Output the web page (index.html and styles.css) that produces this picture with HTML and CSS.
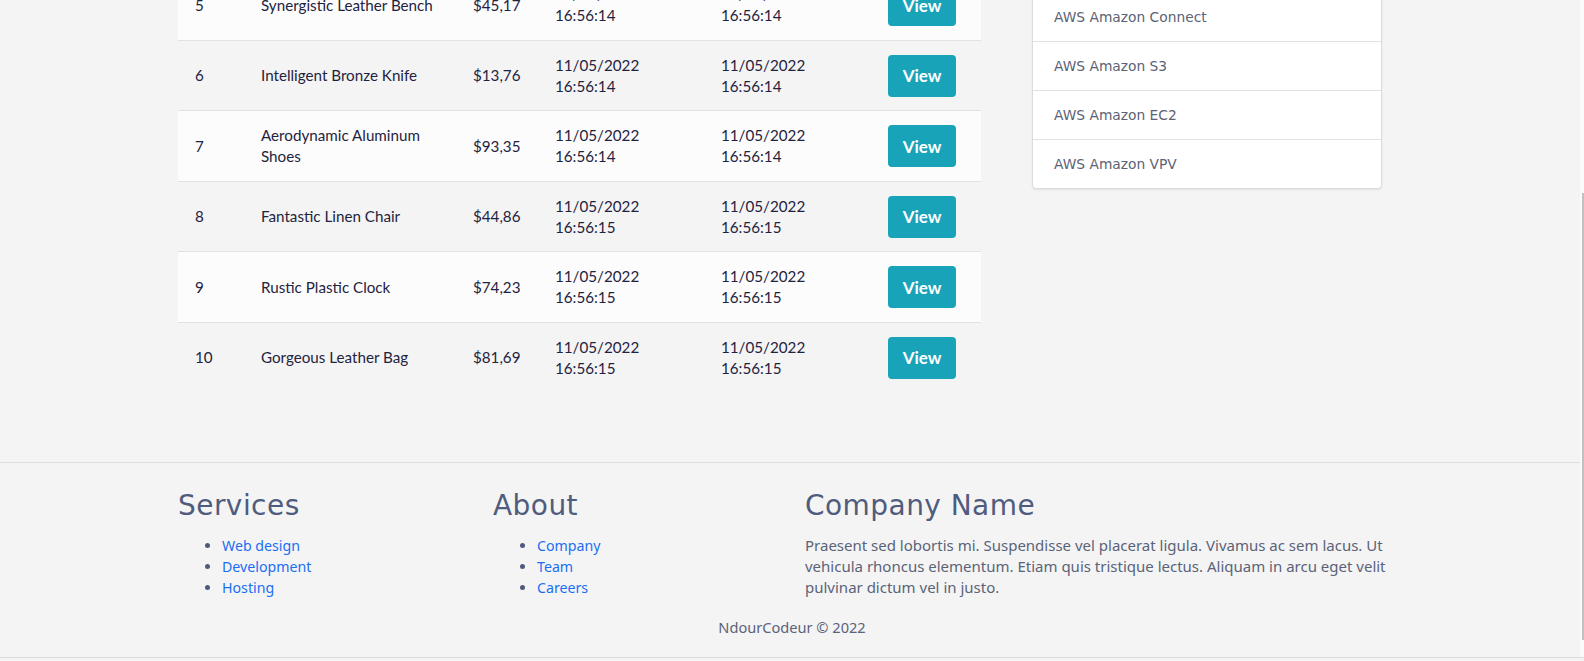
FILE: index.html
```html
<!DOCTYPE html>
<html lang="en">
<head>
<meta charset="utf-8">
<title>Products</title>
<link rel="stylesheet" href="styles.css">
</head>
<body>
<main class="content">
  <div class="container main-row">
    <table class="products">
      <colgroup>
        <col class="c-id"><col class="c-name"><col class="c-price"><col class="c-date"><col class="c-date2"><col class="c-act">
      </colgroup>
      <tbody>
        <tr><td>5</td><td>Synergistic Leather Bench</td><td>$45,17</td><td>11/05/2022 16:56:14</td><td>11/05/2022 16:56:14</td><td><button class="btn-view" type="button">View</button></td></tr>
        <tr><td>6</td><td>Intelligent Bronze Knife</td><td>$13,76</td><td>11/05/2022 16:56:14</td><td>11/05/2022 16:56:14</td><td><button class="btn-view" type="button">View</button></td></tr>
        <tr><td>7</td><td>Aerodynamic Aluminum Shoes</td><td>$93,35</td><td>11/05/2022 16:56:14</td><td>11/05/2022 16:56:14</td><td><button class="btn-view" type="button">View</button></td></tr>
        <tr><td>8</td><td>Fantastic Linen Chair</td><td>$44,86</td><td>11/05/2022 16:56:15</td><td>11/05/2022 16:56:15</td><td><button class="btn-view" type="button">View</button></td></tr>
        <tr><td>9</td><td>Rustic Plastic Clock</td><td>$74,23</td><td>11/05/2022 16:56:15</td><td>11/05/2022 16:56:15</td><td><button class="btn-view" type="button">View</button></td></tr>
        <tr><td>10</td><td>Gorgeous Leather Bag</td><td>$81,69</td><td>11/05/2022 16:56:15</td><td>11/05/2022 16:56:15</td><td><button class="btn-view" type="button">View</button></td></tr>
      </tbody>
    </table>
    <aside class="side">
      <ul class="list-group">
        <li class="list-item">AWS Amazon Connect</li>
        <li class="list-item">AWS Amazon S3</li>
        <li class="list-item">AWS Amazon EC2</li>
        <li class="list-item">AWS Amazon VPV</li>
      </ul>
    </aside>
  </div>
</main>
<footer class="footer">
  <div class="container footer-grid">
    <div class="f-col">
      <h3 class="f-title">Services</h3>
      <ul class="f-list">
        <li><a class="f-link" href="#">Web design</a></li>
        <li><a class="f-link" href="#">Development</a></li>
        <li><a class="f-link" href="#">Hosting</a></li>
      </ul>
    </div>
    <div class="f-col">
      <h3 class="f-title">About</h3>
      <ul class="f-list">
        <li><a class="f-link" href="#">Company</a></li>
        <li><a class="f-link" href="#">Team</a></li>
        <li><a class="f-link" href="#">Careers</a></li>
      </ul>
    </div>
    <div class="f-col">
      <h3 class="f-title">Company Name</h3>
      <p class="f-text">Praesent sed lobortis mi. Suspendisse vel placerat ligula. Vivamus ac sem lacus. Ut vehicula rhoncus elementum. Etiam quis tristique lectus. Aliquam in arcu eget velit pulvinar dictum vel in justo.</p>
    </div>
  </div>
  <p class="copyright">NdourCodeur © 2022</p>
</footer>
<div class="scrollbar"><div class="scroll-thumb"></div></div>
</body>
</html>
```
FILE: styles.css
```css
html, body {
  margin: 0;
  padding: 0;
}
body {
  background: #f4f4f4;
  font-family: "Noto Sans", "Open Sans", sans-serif;
  color: #1f2340;
  overflow: hidden;
}
.container {
  width: 1228px;
  margin: 0 auto;
}
.main-row {
  display: flex;
  align-items: flex-start;
  margin-top: -30px;
  padding-bottom: 69px;
}
.products {
  width: 803px;
  flex: 0 0 803px;
  border-collapse: collapse;
  table-layout: fixed;
  font-family: "Lato", sans-serif;
  font-size: 15.2px;
  color: #1f2340;
}
.c-id { width: 66px; }
.c-name { width: 212px; }
.c-price { width: 82px; }
.c-date { width: 166px; }
.c-date2 { width: 167px; }
.c-act { width: 110px; }
.products td {
  padding: 14px 17px 13px;
  line-height: 21.25px;
  vertical-align: middle;
  border-bottom: 1px solid #e2e2e2;
}
.products tr:last-child td {
  border-bottom-color: transparent;
}
.products tr:nth-child(odd) td {
  background: #fcfcfc;
}
.products tr:nth-child(even) td {
  background: #f4f4f4;
}
.btn-view {
  display: block;
  width: 68px;
  height: 42px;
  border: none;
  border-radius: 4px;
  background: #19a3b9;
  color: #fff;
  font-family: "Lato", sans-serif;
  font-weight: 700;
  font-size: 17px;
  padding: 0;
}
.side {
  width: 350px;
  margin-left: 51px;
  margin-top: 22px;
}
.list-group {
  list-style: none;
  margin: 0;
  padding: 0;
  background: #fff;
  border: 1px solid #dcdcdc;
  border-radius: 4px;
  box-shadow: 0 1px 2px rgba(0, 0, 0, 0.08);
}
.list-item {
  padding: 12px 21px;
  line-height: 24px;
  font-family: "DejaVu Sans", sans-serif;
  font-size: 13.8px;
  color: #5c6275;
  border-bottom: 1px solid #e2e2e2;
}
.list-item:last-child {
  border-bottom: none;
}
.footer {
  border-top: 1px solid #dedede;
  border-bottom: 1px solid #dcdcdc;
  padding: 26px 0 18px;
}
.footer-grid {
  display: grid;
  grid-template-columns: 315px 312px 1fr;
}
.f-title {
  margin: 0 0 12px;
  font-family: "DejaVu Sans", sans-serif;
  font-size: 28px;
  font-weight: 400;
  letter-spacing: 0.45px;
  line-height: 34px;
  color: #505c7d;
}
.f-list {
  margin: 0;
  padding-left: 44px;
  font-size: 14.2px;
  line-height: 21px;
  color: #4f5b7c;
}
.f-link {
  color: #1b6ef3;
  text-decoration: none;
}
.f-text {
  margin: 0;
  font-size: 15px;
  line-height: 21px;
  color: #5a6378;
}
.copyright {
  margin: 17px 0 0;
  text-align: center;
  font-size: 14.6px;
  line-height: 24px;
  color: #5a6378;
}
.scrollbar {
  position: fixed;
  top: 0;
  right: 0;
  width: 4px;
  height: 657px;
  background: #fafafa;
}
.scroll-thumb {
  position: absolute;
  left: 2px;
  top: 193px;
  width: 2px;
  height: 447px;
  background: #c1c1c1;
}
```
